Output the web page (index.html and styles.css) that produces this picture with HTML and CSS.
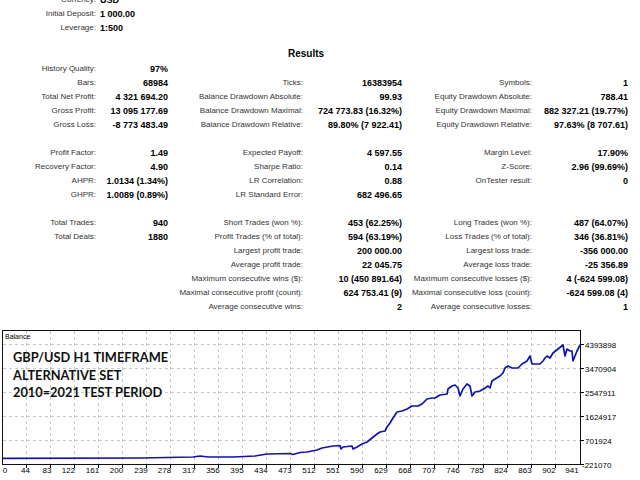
FILE: index.html
```html
<!DOCTYPE html>
<html>
<head>
<meta charset="utf-8">
<link rel="stylesheet" href="styles.css">
</head>
<body>
<div class="report">
  <div class="settings">
    <span class="l">Currency:</span><span class="sv">USD</span>
    <span class="l">Initial Deposit:</span><span class="sv">1 000.00</span>
    <span class="l">Leverage:</span><span class="sv">1:500</span>
  </div>
  <div class="title">Results</div>
  <div class="results">
    <span class="l">History Quality:</span><span class="v">97%</span><span></span><span></span><span></span><span></span>
    <span class="l">Bars:</span><span class="v">68984</span><span class="l">Ticks:</span><span class="v">16383954</span><span class="l">Symbols:</span><span class="v">1</span>
    <span class="l">Total Net Profit:</span><span class="v">4 321 694.20</span><span class="l">Balance Drawdown Absolute:</span><span class="v">99.93</span><span class="l">Equity Drawdown Absolute:</span><span class="v">788.41</span>
    <span class="l">Gross Profit:</span><span class="v">13 095 177.69</span><span class="l">Balance Drawdown Maximal:</span><span class="v">724 773.83 (16.32%)</span><span class="l">Equity Drawdown Maximal:</span><span class="v">882 327.21 (19.77%)</span>
    <span class="l">Gross Loss:</span><span class="v">-8 773 483.49</span><span class="l">Balance Drawdown Relative:</span><span class="v">89.80% (7 922.41)</span><span class="l">Equity Drawdown Relative:</span><span class="v">97.63% (8 707.61)</span>
    <div class="gap"></div>
    <span class="l">Profit Factor:</span><span class="v">1.49</span><span class="l">Expected Payoff:</span><span class="v">4 597.55</span><span class="l">Margin Level:</span><span class="v">17.90%</span>
    <span class="l">Recovery Factor:</span><span class="v">4.90</span><span class="l">Sharpe Ratio:</span><span class="v">0.14</span><span class="l">Z-Score:</span><span class="v">2.96 (99.69%)</span>
    <span class="l">AHPR:</span><span class="v">1.0134 (1.34%)</span><span class="l">LR Correlation:</span><span class="v">0.88</span><span class="l">OnTester result:</span><span class="v">0</span>
    <span class="l">GHPR:</span><span class="v">1.0089 (0.89%)</span><span class="l">LR Standard Error:</span><span class="v">682 496.65</span><span></span><span></span>
    <div class="gap"></div>
    <span class="l">Total Trades:</span><span class="v">940</span><span class="l">Short Trades (won %):</span><span class="v">453 (62.25%)</span><span class="l">Long Trades (won %):</span><span class="v">487 (64.07%)</span>
    <span class="l">Total Deals:</span><span class="v">1880</span><span class="l">Profit Trades (% of total):</span><span class="v">594 (63.19%)</span><span class="l">Loss Trades (% of total):</span><span class="v">346 (36.81%)</span>
    <span></span><span></span><span class="l">Largest profit trade:</span><span class="v">200 000.00</span><span class="l">Largest loss trade:</span><span class="v">-356 000.00</span>
    <span></span><span></span><span class="l">Average profit trade:</span><span class="v">22 045.75</span><span class="l">Average loss trade:</span><span class="v">-25 356.89</span>
    <span></span><span></span><span class="l">Maximum consecutive wins ($):</span><span class="v">10 (450 891.64)</span><span class="l">Maximum consecutive losses ($):</span><span class="v">4 (-624 599.08)</span>
    <span></span><span></span><span class="l">Maximal consecutive profit (count):</span><span class="v">624 753.41 (9)</span><span class="l">Maximal consecutive loss (count):</span><span class="v">-624 599.08 (4)</span>
    <span></span><span></span><span class="l">Average consecutive wins:</span><span class="v">2</span><span class="l">Average consecutive losses:</span><span class="v">1</span>
  </div>
  <div class="chart">
    <svg class="plot" width="640" height="160" viewBox="0 0 640 160">
      <g class="grid">
        <line x1="26.5" y1="5" x2="26.5" y2="138"/><line x1="50.5" y1="5" x2="50.5" y2="138"/><line x1="74.5" y1="5" x2="74.5" y2="138"/><line x1="98.5" y1="5" x2="98.5" y2="138"/><line x1="122.5" y1="5" x2="122.5" y2="138"/><line x1="146.5" y1="5" x2="146.5" y2="138"/><line x1="170.5" y1="5" x2="170.5" y2="138"/><line x1="194.5" y1="5" x2="194.5" y2="138"/><line x1="218.5" y1="5" x2="218.5" y2="138"/><line x1="242.5" y1="5" x2="242.5" y2="138"/><line x1="266.5" y1="5" x2="266.5" y2="138"/><line x1="290.5" y1="5" x2="290.5" y2="138"/><line x1="314.5" y1="5" x2="314.5" y2="138"/><line x1="338.5" y1="5" x2="338.5" y2="138"/><line x1="362.5" y1="5" x2="362.5" y2="138"/><line x1="386.5" y1="5" x2="386.5" y2="138"/><line x1="410.5" y1="5" x2="410.5" y2="138"/><line x1="434.5" y1="5" x2="434.5" y2="138"/><line x1="458.5" y1="5" x2="458.5" y2="138"/><line x1="483.5" y1="5" x2="483.5" y2="138"/><line x1="507.5" y1="5" x2="507.5" y2="138"/><line x1="531.5" y1="5" x2="531.5" y2="138"/><line x1="555.5" y1="5" x2="555.5" y2="138"/>
        <line x1="3" y1="18.5" x2="580" y2="18.5"/><line x1="3" y1="42.5" x2="580" y2="42.5"/><line x1="3" y1="66.5" x2="580" y2="66.5"/><line x1="3" y1="90.5" x2="580" y2="90.5"/><line x1="3" y1="114.5" x2="580" y2="114.5"/>
      </g>
      <g class="ticks">
        <line x1="26.5" y1="139" x2="26.5" y2="142"/><line x1="50.5" y1="139" x2="50.5" y2="142"/><line x1="74.5" y1="139" x2="74.5" y2="142"/><line x1="98.5" y1="139" x2="98.5" y2="142"/><line x1="122.5" y1="139" x2="122.5" y2="142"/><line x1="146.5" y1="139" x2="146.5" y2="142"/><line x1="170.5" y1="139" x2="170.5" y2="142"/><line x1="194.5" y1="139" x2="194.5" y2="142"/><line x1="218.5" y1="139" x2="218.5" y2="142"/><line x1="242.5" y1="139" x2="242.5" y2="142"/><line x1="266.5" y1="139" x2="266.5" y2="142"/><line x1="290.5" y1="139" x2="290.5" y2="142"/><line x1="314.5" y1="139" x2="314.5" y2="142"/><line x1="338.5" y1="139" x2="338.5" y2="142"/><line x1="362.5" y1="139" x2="362.5" y2="142"/><line x1="386.5" y1="139" x2="386.5" y2="142"/><line x1="410.5" y1="139" x2="410.5" y2="142"/><line x1="434.5" y1="139" x2="434.5" y2="142"/><line x1="458.5" y1="139" x2="458.5" y2="142"/><line x1="483.5" y1="139" x2="483.5" y2="142"/><line x1="507.5" y1="139" x2="507.5" y2="142"/><line x1="531.5" y1="139" x2="531.5" y2="142"/><line x1="555.5" y1="139" x2="555.5" y2="142"/>
        <line x1="581" y1="18.5" x2="584" y2="18.5"/><line x1="581" y1="42.5" x2="584" y2="42.5"/><line x1="581" y1="66.5" x2="584" y2="66.5"/><line x1="581" y1="90.5" x2="584" y2="90.5"/><line x1="581" y1="114.5" x2="584" y2="114.5"/><line x1="581" y1="138.5" x2="584" y2="138.5"/>
      </g>
      <rect class="frame" x="2.5" y="4.5" width="578" height="134"/>
      <polyline class="balance" points="3,132.3 140,132 193,131 200,130 208,131 233,131 255,130 267,128 290,127.5 293,128.5 300,126.5 307,126 317,124 322,122 333,120 340,119.5 341,123 343,121 352,120 353,123 357,121 362,118 367,116 372,112 377,108 380,106 385,105 387,101 390,97 393,92 397,86 402,85 407,83 412,80 418,80 422,78 427,73 432,72 435,72 440,69 447,68 448,63 452,60 455,59 458,62 460,70 463,63 467,58 470,60 472,70 475,66 480,65 485,62 488,60 490,62 492,55 495,53 500,50 503,47 505,42 508,40 512,42 518,42 522,38 527,35 530,30 532,38 540,38 543,35 545,32 547,30 550,32 553,27 558,23 563,19 565,30 567,23 570,25 572,25 573,35 575,30 577,25 580,19"/>
      <text class="cap" x="5" y="12.5">Balance</text>
      <g class="ylab">
        <text x="585" y="21.5">4393898</text><text x="585" y="45.5">3470904</text><text x="585" y="69.5">2547911</text><text x="585" y="93.5">1624917</text><text x="585" y="117.5">701924</text><text x="582" y="141.5">-221070</text>
      </g>
      <g class="xlab">
        <text x="5" y="147">0</text><text x="25.5" y="147">44</text><text x="47" y="147">83</text><text x="68.5" y="147">122</text><text x="92.5" y="147">161</text><text x="116.5" y="147">200</text><text x="141" y="147">239</text><text x="164.5" y="147">278</text><text x="189" y="147">317</text><text x="213" y="147">356</text><text x="237" y="147">395</text><text x="261" y="147">434</text><text x="285" y="147">473</text><text x="309" y="147">512</text><text x="333" y="147">551</text><text x="357" y="147">590</text><text x="381" y="147">629</text><text x="405" y="147">668</text><text x="429" y="147">707</text><text x="453" y="147">746</text><text x="477" y="147">785</text><text x="501" y="147">824</text><text x="525" y="147">863</text><text x="549" y="147">902</text><text x="572" y="147">941</text>
      </g>
    </svg>
    <div class="note">
      <div>GBP/USD H1 TIMEFRAME</div>
      <div>ALTERNATIVE SET</div>
      <div>2010=2021 TEST PERIOD</div>
    </div>
  </div>
</div>
</body>
</html>
```

FILE: styles.css
```css
html, body {
  margin: 0;
  padding: 0;
  background: #fff;
  overflow: hidden;
}
body {
  font-family: "Liberation Sans", Arial, sans-serif;
  color: #000;
}
.report {
  margin-top: -7px;
  width: 640px;
}
.settings {
  display: grid;
  grid-template-columns: 96px auto;
  grid-auto-rows: 14px;
  line-height: 14px;
}
.l {
  font-size: 8px;
  color: #333;
  text-align: right;
  white-space: nowrap;
}
.sv {
  font-size: 9px;
  font-weight: bold;
  padding-left: 4px;
  white-space: nowrap;
}
.v {
  font-size: 9px;
  font-weight: bold;
  text-align: right;
  white-space: nowrap;
}
.title {
  width: 612px;
  margin-top: 12px;
  margin-bottom: 1px;
  text-align: center;
  font-size: 10px;
  font-weight: bold;
  line-height: 14px;
}
.results {
  display: grid;
  grid-template-columns: 96px 72px 135px 99px 130px 96px;
  grid-auto-rows: 14px;
  line-height: 14px;
}
.results .gap {
  grid-column: 1 / -1;
  height: 11px;
}
.chart {
  position: relative;
  margin-top: 12px;
  height: 160px;
}
.plot {
  display: block;
}
.grid line {
  stroke: #c8c8c8;
  stroke-width: 1;
  stroke-dasharray: 3 3;
}
.ticks line {
  stroke: #000;
  stroke-width: 1;
}
.frame {
  fill: none;
  stroke: #111;
  stroke-width: 1;
}
.balance {
  fill: none;
  stroke: #1212ad;
  stroke-width: 1.7;
  stroke-linejoin: round;
}
.cap {
  font-family: "Liberation Sans", Arial, sans-serif;
  font-size: 7px;
  fill: #000;
}
.ylab text {
  font-family: "Liberation Sans", Arial, sans-serif;
  font-size: 8px;
  fill: #000;
}
.xlab text {
  font-family: "Liberation Sans", Arial, sans-serif;
  font-size: 8px;
  fill: #000;
  text-anchor: middle;
}
.note {
  position: absolute;
  left: 13px;
  top: 23px;
  font-family: Lato, "Liberation Sans", sans-serif;
  font-weight: 700;
  font-size: 12.8px;
  line-height: 17.5px;
  color: #111;
}
```
